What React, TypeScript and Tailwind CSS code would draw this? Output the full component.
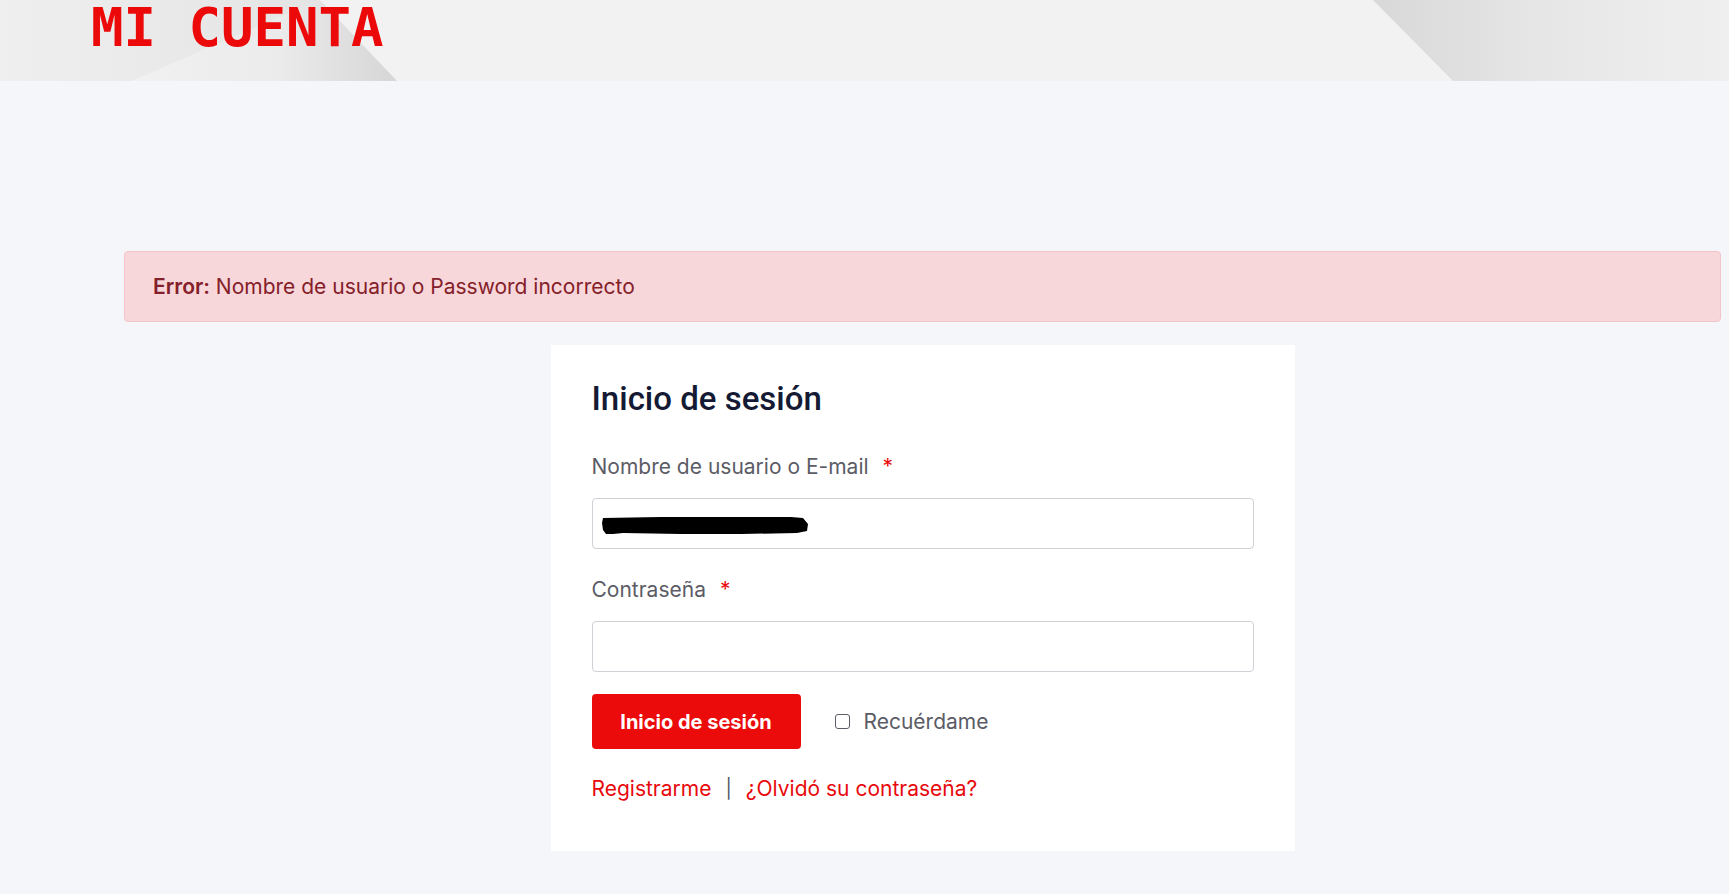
import { useState } from "react";

const HeaderArt = () => (
  <svg
    className="absolute inset-0 w-full h-full"
    viewBox="0 0 1729 81"
    preserveAspectRatio="none"
  >
    <defs>
      <linearGradient id="leftShade" x1="0" y1="0" x2="1" y2="0">
        <stop offset="0" stopColor="#efefef" />
        <stop offset="1" stopColor="#e4e4e4" />
      </linearGradient>
      <linearGradient id="wedge" x1="0" y1="0" x2="1" y2="0">
        <stop offset="0" stopColor="#f1f1f1" />
        <stop offset="0.55" stopColor="#ebebeb" />
        <stop offset="1" stopColor="#d6d6d6" />
      </linearGradient>
      <linearGradient id="rightShade" x1="0" y1="0" x2="1" y2="0">
        <stop offset="0" stopColor="#d8d8d8" />
        <stop offset="0.5" stopColor="#e7e7e7" />
        <stop offset="1" stopColor="#efefef" />
      </linearGradient>
    </defs>
    <rect width="1729" height="81" fill="#f2f2f2" />
    <polygon points="0,0 320,0 132,81 0,81" fill="url(#leftShade)" />
    <polygon points="320,0 132,81 397,81" fill="url(#wedge)" />
    <polygon points="1373,0 1729,0 1729,81 1453,81" fill="url(#rightShade)" />
  </svg>
);

// redacted username scribble
const Redacted = () => (
  <svg width="208" height="19" viewBox="0 0 208 19" className="block">
    <path
      d="M2 2 L60 1 L120 1 L190 1 L202 2 L207 8 L206 15 L196 17 L140 18 L80 18 L22 17 L12 18 L5 18 L2 14 L1 7 Z"
      fill="#000"
    />
  </svg>
);

const Field = ({ label, children }: { label: string; children: React.ReactNode }) => (
  <div className="flex flex-col">
    <label className="text-[21px] leading-[28px] text-[#5c5c66]">
      {label}
      <span className="ml-[14px] text-[#e8090c]">*</span>
    </label>
    <div className="mt-[17px]">{children}</div>
  </div>
);

export default function App() {
  const [remember, setRemember] = useState(false);

  return (
    <div className="min-h-[894px] bg-[#f5f6fa] font-['Inter','Noto_Sans',sans-serif]">
      <header className="relative h-[81px] overflow-hidden">
        <HeaderArt />
        <h1 className="relative pl-[91px] text-[54px] leading-[56px] font-bold text-[#ec0909] font-['DejaVu_Sans_Mono',monospace]">
          MI CUENTA
        </h1>
      </header>

      <main className="ml-[124px] mr-[8px] pt-[170px] pb-[45px]">
        <div className="h-[71px] flex items-center rounded-[4px] border border-[#f3c4c9] bg-[#f8d7da] px-[28px] text-[21px] text-[#842029]">
          <p>
            <span className="font-semibold">Error:</span> Nombre de usuario o Password incorrecto
          </p>
        </div>

        <div className="mx-auto mt-[23px] w-[744px] bg-white px-[41px] pt-[34px] pb-[46px]">
          <h2 className="text-[33px] leading-[40px] font-medium text-[#141a33] font-['Roboto',sans-serif]">
            Inicio de sesión
          </h2>

          <div className="mt-[34px] flex flex-col gap-[27px]">
            <Field label="Nombre de usuario o E-mail">
              <div className="h-[51px] rounded-[4px] border border-[#cfd1d6] bg-white flex items-center pl-[8px] pt-[4px]">
                <Redacted />
              </div>
            </Field>
            <Field label="Contraseña">
              <input
                type="password"
                className="h-[51px] w-full rounded-[4px] border border-[#cfd1d6] bg-white px-[12px] outline-none"
              />
            </Field>
          </div>

          <div className="mt-[22px] flex items-center">
            <button className="h-[55px] w-[209px] rounded-[4px] bg-[#ec0b0b] text-[20px] font-bold text-white">
              Inicio de sesión
            </button>
            <label className="ml-[34px] flex items-center gap-[14px] text-[21px] text-[#5c5c66]">
              <input
                type="checkbox"
                checked={remember}
                onChange={() => setRemember(!remember)}
                className="h-[15px] w-[15px] appearance-none rounded-[3px] border border-[#5c5c66] bg-white"
              />
              Recuérdame
            </label>
          </div>

          <div className="mt-[24px] flex items-center gap-[14px] text-[21px] text-[#e8090c]">
            <a href="#">Registrarme</a>
            <span className="text-[19px] text-[#55555e]">|</span>
            <a href="#">¿Olvidó su contraseña?</a>
          </div>
        </div>
      </main>
    </div>
  );
}
